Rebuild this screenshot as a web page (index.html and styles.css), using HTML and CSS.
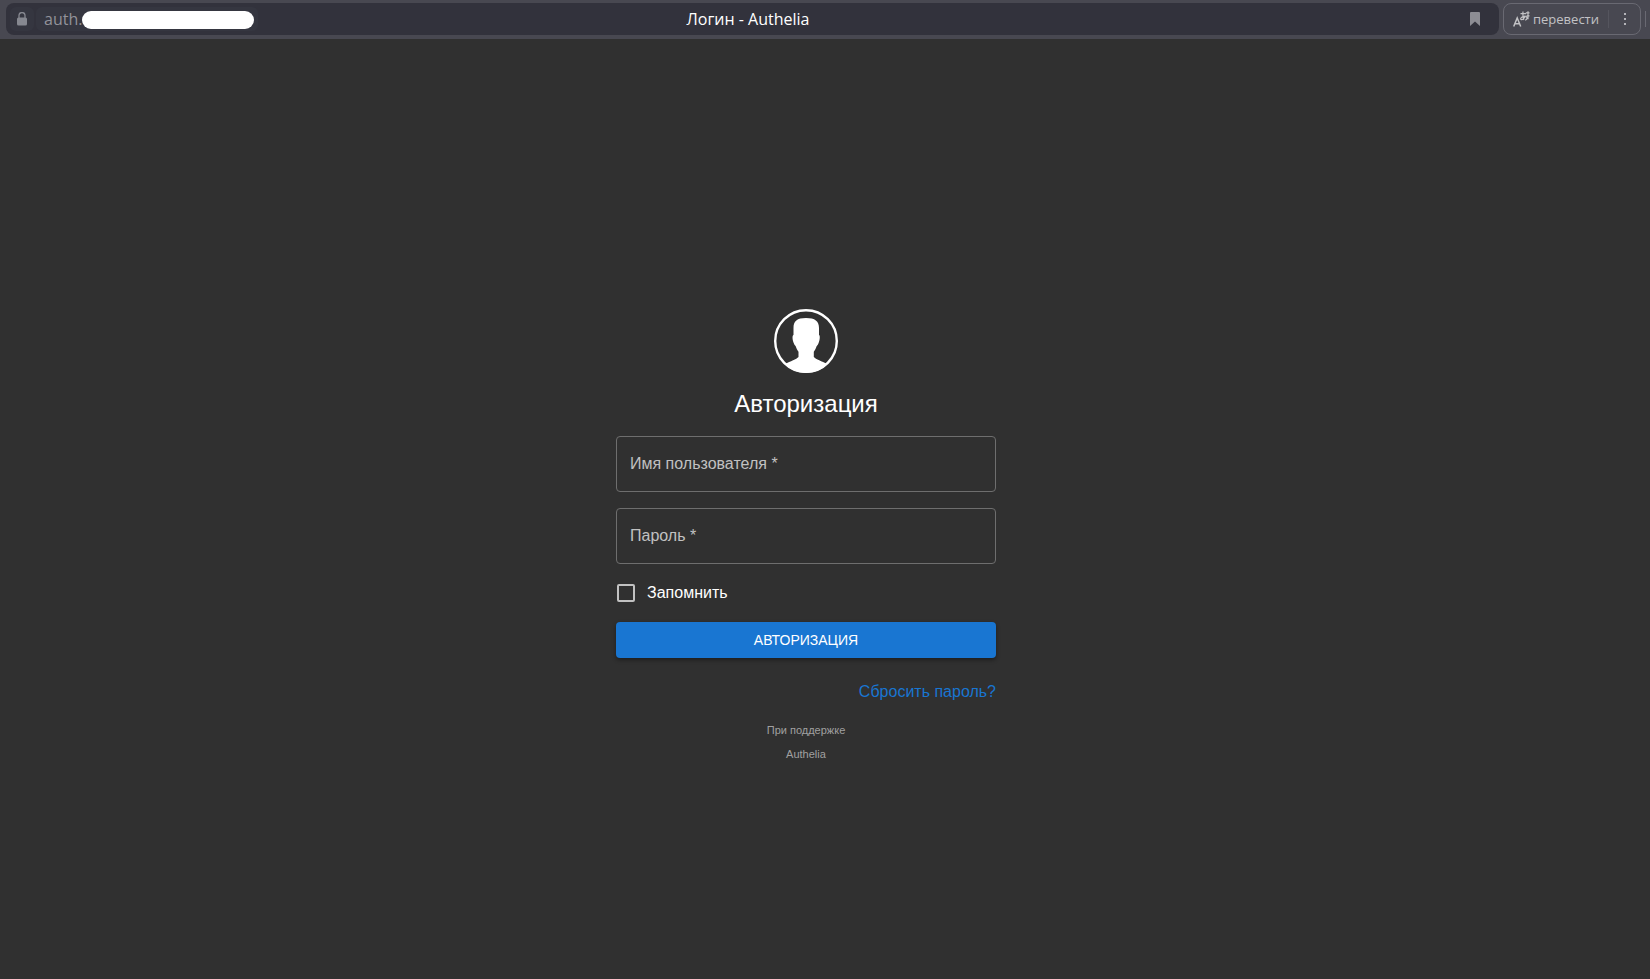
FILE: index.html
```html
<!DOCTYPE html>
<html lang="ru">
<head>
<meta charset="utf-8">
<meta name="viewport" content="width=device-width, initial-scale=1">
<title>Логин - Authelia</title>
<link rel="stylesheet" href="styles.css">
</head>
<body>
<header class="toolbar">
  <div class="address">
    <div class="address-left">
      <button class="lock" type="button" aria-label="Сведения о сайте">
        <svg width="10" height="14" viewBox="0 0 10 14" aria-hidden="true"><path d="M2 6V3.600a3 3 0 0 1 6 0V6" fill="none" stroke="#868890" stroke-width="1.300"/><rect y="5.500" width="10" height="8" rx="1.500" fill="#868890"/></svg>
      </button>
      <div class="host"><span>auth.</span><span class="mask"></span></div>
    </div>
    <div class="page-title">Логин - Authelia</div>
    <button class="bookmark" type="button" aria-label="Добавить закладку">
      <svg width="10" height="14" viewBox="0 0 10 14" aria-hidden="true"><path d="M1 0h8a1 1 0 0 1 1 1v13L5 9.500 0 14V1a1 1 0 0 1 1-1z" fill="#8d8d94"/></svg>
    </button>
  </div>
  <div class="translate">
    <button class="translate-main" type="button">
      <svg width="17" height="16" viewBox="0 0 17 16" fill="none" stroke="#c2c2c5" aria-hidden="true"><path d="M.7 15.500 4.200 7 7.700 15.500M2 12.700h4.500" stroke-width="1.500"/><path d="M7.500 2.700H13M10 .5c-.3 3.500 0 6 .8 8.500M12.200 4.500C11.500 7.500 9.300 9.300 8 8.500 7 7.300 9 5.200 12 5.300c2.700.2 2.700 3 .2 4M12.800 1.800h3.700M15 .3v8M13.500 4.800h3" stroke-width="1.200"/></svg>
      <span>перевести</span>
    </button>
    <button class="more" type="button" aria-label="Ещё">
      <svg width="2" height="12" viewBox="0 0 2 12" fill="#b4b4b9" aria-hidden="true"><path d="M0 0h2v2H0zM0 5h2v2H0zM0 10h2v2H0z"/></svg>
    </button>
  </div>
  <span class="toolbar-rule"></span>
</header>
<main class="page">
  <form class="login">
    <svg class="avatar" width="64" height="64" viewBox="0 0 64 64" aria-hidden="true">
      <circle cx="32" cy="32" r="30.800" fill="none" stroke="#fff" stroke-width="2.400"/>
      <path d="M19.500 19C19.500 12 23 9 32 9s13 3 13 10v7c1.300.5.900 5-.4 8-.5 1.800-1.300 2.200-2 3.200-.7 2.300-1.600 4-2.800 5.500v5.200c2 2.200 8 4.200 13.500 7.100C48 60.500 40.500 64 32 64S16 60.500 11 55c5.500-2.900 11.500-4.900 13.500-7.100v-5.200c-1.200-1.500-2.100-3.200-2.800-5.500-.7-1-1.500-1.400-2-3.200-1.300-3-1.700-7.500-.2-8z" fill="#fff"/>
    </svg>
    <h1 class="heading">Авторизация</h1>
    <div class="field">
      <input class="field-input" id="username" type="text" required>
      <label class="field-label" for="username">Имя пользователя *</label>
    </div>
    <div class="field">
      <input class="field-input" id="password" type="password" required>
      <label class="field-label" for="password">Пароль *</label>
    </div>
    <div class="remember">
      <input class="checkbox" id="remember" type="checkbox">
      <label for="remember">Запомнить</label>
    </div>
    <button class="submit" type="submit">АВТОРИЗАЦИЯ</button>
    <a class="reset" href="#reset">Сбросить пароль?</a>
    <a class="powered" href="#authelia"><span>При поддержке</span><span>Authelia</span></a>
  </form>
</main>
</body>
</html>
```
FILE: styles.css
```css
* {
  box-sizing: border-box;
}

body {
  display: flex;
  flex-direction: column;
  min-height: 100vh;
  margin: 0;
  background: #303030;
  color: #fff;
  font: 16px/24px "Liberation Sans", Arial, sans-serif;
}

button {
  padding: 0;
  border: 0;
  background: none;
  color: inherit;
  font: inherit;
}

.toolbar {
  display: flex;
  gap: 4px;
  padding: 3px 4px 4px 6px;
  background: #484851;
  font-family: "Open Sans", "Noto Sans", sans-serif;
}

.address {
  display: grid;
  grid-template-columns: 1fr auto 1fr;
  align-items: center;
  flex: 1;
  height: 32px;
  padding: 0 19px 0 4px;
  border-radius: 8px;
  background: #32323c;
}

.address-left {
  display: flex;
  gap: 2px;
}

.lock {
  display: flex;
  align-items: center;
  justify-content: center;
  width: 24px;
  height: 24px;
  border-radius: 6px;
  background: #353640;
}

.host {
  display: flex;
  align-items: center;
  height: 24px;
  padding: 0 4px 0 8px;
  border-radius: 6px;
  background: #353640;
  color: #92929a;
}

.mask {
  width: 172px;
  height: 18px;
  margin-top: 2px;
  border-radius: 9px;
  background: #fff;
}

.page-title {
  padding-left: 6px;
  font-size: 16px;
}

.bookmark {
  display: flex;
  justify-self: end;
}

.translate {
  display: flex;
  align-items: center;
  height: 32px;
  border: 1px solid #696972;
  border-radius: 8px;
  color: #c2c2c5;
  font-size: 13px;
}

.translate-main {
  display: flex;
  align-items: center;
  gap: 3px;
  padding: 0 9px;
}

.more {
  display: flex;
  justify-content: center;
  align-items: center;
  width: 32px;
  height: 18px;
  border-left: 1px solid #55555e;
}

.toolbar-rule {
  align-self: center;
  width: 1px;
  height: 16px;
  background: #696972;
}

.page {
  display: flex;
  justify-content: center;
  padding: 270px 38px 32px 0;
}

.login {
  display: flex;
  flex-direction: column;
  width: 100%;
  max-width: 380px;
}

.avatar {
  align-self: center;
}

.heading {
  margin: 15px 0 16px;
  font-size: 24px;
  font-weight: 400;
  line-height: 32px;
  text-align: center;
}

.field {
  position: relative;
  display: flex;
  margin-bottom: 16px;
}

.field-input {
  width: 100%;
  height: 56px;
  padding: 16px 14px;
  border: 1px solid #6e6e6e;
  border-radius: 4px;
  background: transparent;
  color: #fff;
  font: inherit;
}

.field-label {
  position: absolute;
  top: 16px;
  left: 14px;
  color: #c1c1c1;
  pointer-events: none;
}

.field-input:focus + .field-label,
.field-input:valid + .field-label {
  top: -12px;
  padding: 0 4px;
  background: #303030;
  font-size: 12px;
}

.remember {
  display: flex;
  align-items: center;
  gap: 12px;
  padding: 1px 1px 0;
}

.checkbox {
  appearance: none;
  width: 18px;
  height: 18px;
  margin: 0;
  border: 2px solid #c1c1c1;
  border-radius: 2px;
}

.checkbox:checked {
  background: #1976d2;
}

.submit {
  height: 36px;
  margin: 17px 0 22px;
  border-radius: 4px;
  background: #1976d2;
  box-shadow: 0 2px 4px rgba(0, 0, 0, 0.4);
  font-size: 14px;
}

.reset {
  align-self: flex-end;
  color: #1976d2;
  text-decoration: none;
}

.powered {
  display: flex;
  flex-direction: column;
  align-items: center;
  margin-top: 14px;
  color: #a0a0a0;
  font-size: 11px;
  text-decoration: none;
}
```
